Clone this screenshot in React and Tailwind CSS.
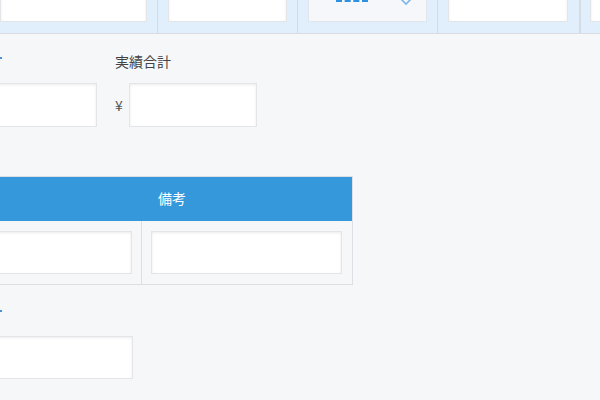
import React from "react";

const inputCls =
  "block bg-white border border-[#e3e5e8] shadow-[inset_0_1px_3px_rgba(0,0,0,0.08)]";

function TopRow() {
  return (
    <div className="flex -mt-[31px] -ml-[10px] bg-[#e1effc] border-b border-[#d9dde2]">
      <div className="w-[168px] shrink-0 border-r border-[#d3dbe3] pl-[10px] pr-[10px] pt-[10px] pb-[11px]">
        <div className={inputCls + " w-full h-[43px]"} />
      </div>
      <div className="w-[140px] shrink-0 border-r border-[#d3dbe3] px-[10px] pt-[10px] pb-[11px]">
        <div className={inputCls + " w-full h-[43px]"} />
      </div>
      <div className="w-[140px] shrink-0 border-r border-[#d3dbe3] px-[10px] pt-[10px] pb-[11px]">
        <div className="relative h-[43px] bg-[#f5f7fa] border border-[#e3e5e8]">
          <div className="absolute left-[27px] top-[20px] w-[32px] h-[2px] border-t-[2px] border-dashed border-[#2f8fe0]" />
          <svg className="absolute left-[90px] top-[17px]" width="14" height="10" viewBox="0 0 14 10" fill="none">
            <path d="M2 2 L7 7 L12 2" stroke="#7fb5e8" strokeWidth="1.6" />
          </svg>
        </div>
      </div>
      <div className="w-[142px] shrink-0 border-r border-[#d3dbe3] pl-[10px] pr-[11px] pt-[10px] pb-[11px]">
        <div className={inputCls + " w-full h-[43px]"} />
      </div>
      <div className="w-[140px] shrink-0 border-l border-[#d3dbe3] pl-[9px] pt-[10px] pb-[11px]">
        <div className={inputCls + " w-full h-[43px]"} />
      </div>
    </div>
  );
}

function Totals() {
  return (
    <div className="flex gap-[18px] -ml-[45px] mt-[17px]">
      <div className="w-[142px] shrink-0">
        <div className="h-[20px]" />
        <div className="flex items-center mt-[12px]">
          <span className="w-[14px]" />
          <div className={inputCls + " h-[44px] w-[128px]"} />
        </div>
      </div>
      <div className="w-[142px] shrink-0">
        <div className="text-[14px] leading-[20px] text-[#444] h-[20px]">実績合計</div>
        <div className="flex items-center mt-[12px]">
          <span className="w-[14px] text-[14px] text-[#555]">¥</span>
          <div className={inputCls + " h-[44px] w-[128px]"} />
        </div>
      </div>
    </div>
  );
}

export default function App() {
  return (
    <div
      className="relative w-[600px] h-[400px] overflow-hidden bg-[#f6f7f9]"
      style={{ fontFamily: '"Noto Sans CJK JP", "Noto Sans", sans-serif' }}
    >
      <TopRow />
      <div className="absolute left-0 top-[57px] w-[2px] h-[2px] bg-[#4a90d9]" />
      <Totals />
      <table className="-ml-[9px] mt-[49px] w-[362px] border-collapse border border-[#dcdfe3]">
        <thead>
          <tr className="bg-[#3598db] h-[44px]">
            <th colSpan={2} className="text-white text-[14px] font-normal">備考</th>
          </tr>
        </thead>
        <tbody>
          <tr className="h-[64px]">
            <td className="w-[150px] border-r border-[#dcdfe3] p-0">
              <div className={inputCls + " h-[43px] w-[140px]"} />
            </td>
            <td className="pl-[9px] pr-[10px]">
              <div className={inputCls + " w-full h-[43px]"} />
            </td>
          </tr>
        </tbody>
      </table>
      <div className="absolute left-0 top-[310px] w-[2px] h-[2px] bg-[#4a90d9]" />
      <div className="-ml-[20px] mt-[51px] w-[153px]">
        <div className={inputCls + " w-full h-[43px]"} />
      </div>
    </div>
  );
}
